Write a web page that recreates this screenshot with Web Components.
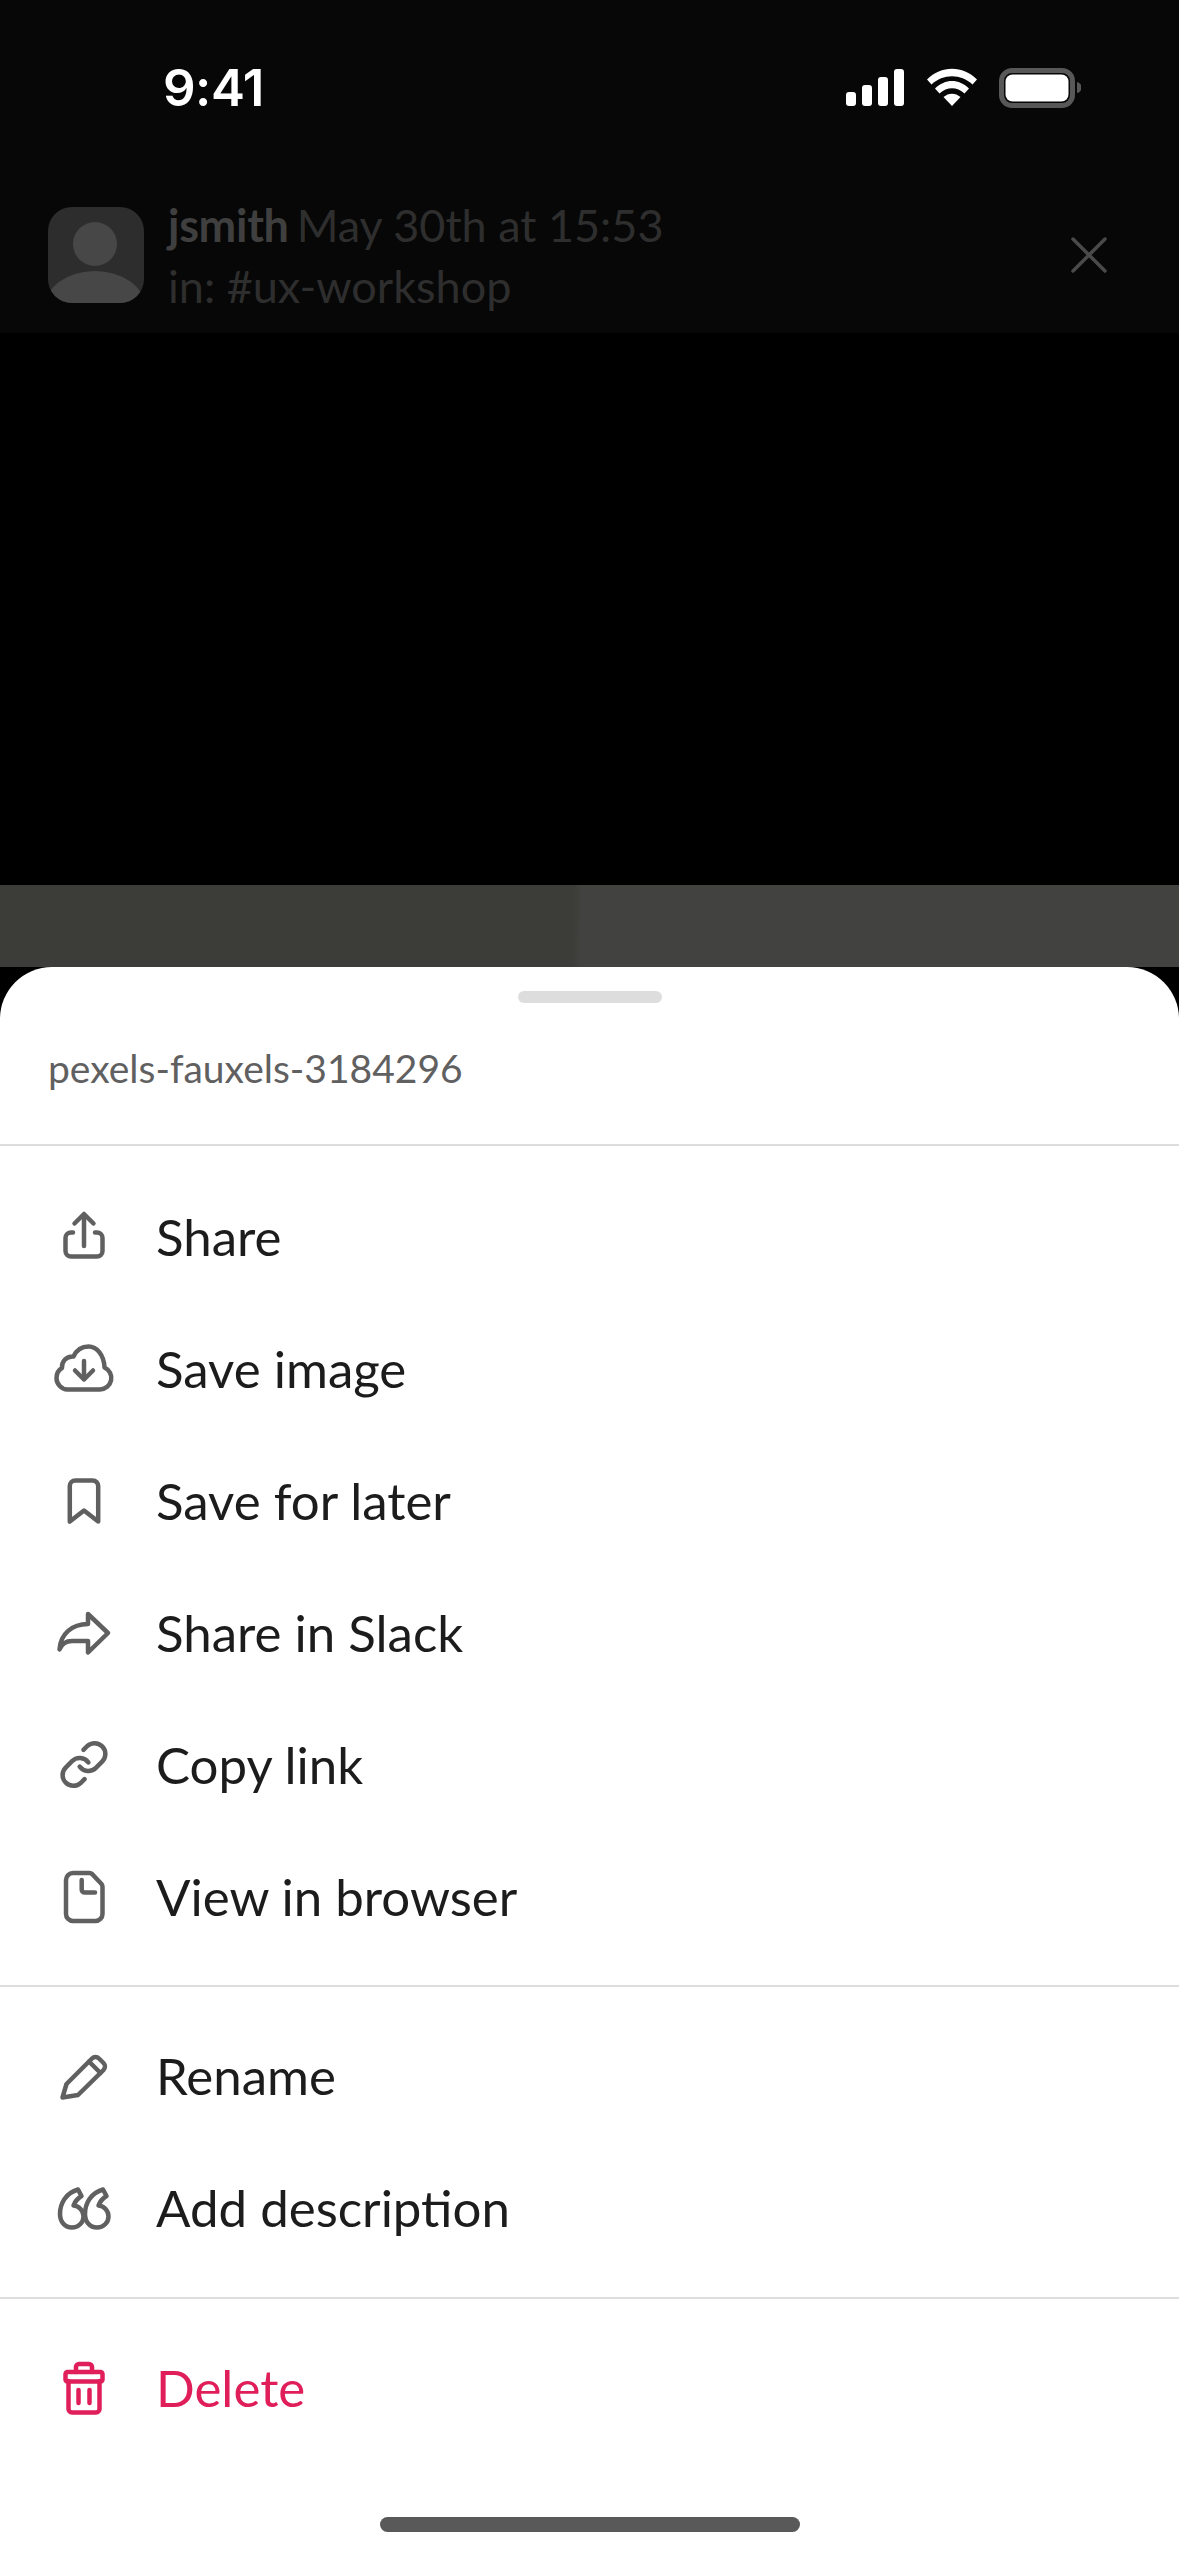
<!DOCTYPE html>
<html lang="en">
<head>
<meta charset="utf-8">
<title>File actions</title>
<style>
  html, body { margin: 0; padding: 0; background: #000; }
  body { width: 1179px; height: 2556px; overflow: hidden; font-family: "Lato", "Noto Sans", sans-serif; }
  file-screen { height: 2556px; }
</style>
</head>
<body>
<file-screen>
  <viewer-header slot="header" sender="jsmith" stamp="May 30th at 15:53" channel="in: #ux-workshop"></viewer-header>
  <photo-stage slot="stage"></photo-stage>
  <action-sheet slot="sheet" title="pexels-fauxels-3184296">
    <sheet-group>
      <sheet-item icon="share">Share</sheet-item>
      <sheet-item icon="cloud">Save image</sheet-item>
      <sheet-item icon="bookmark">Save for later</sheet-item>
      <sheet-item icon="forward">Share in Slack</sheet-item>
      <sheet-item icon="link">Copy link</sheet-item>
      <sheet-item icon="doc">View in browser</sheet-item>
    </sheet-group>
    <sheet-group>
      <sheet-item icon="pencil">Rename</sheet-item>
      <sheet-item icon="quote">Add description</sheet-item>
    </sheet-group>
    <sheet-group>
      <sheet-item icon="trash" danger>Delete</sheet-item>
    </sheet-group>
  </action-sheet>
</file-screen>

<script>
// All icons are drawn in a 72x72 box, stroked with currentColor
const ICONS = {
  share: '<path d="M25 30.5h-2a5.5 5.5 0 0 0-5.5 5.5v13a5.5 5.5 0 0 0 5.5 5.5h26a5.5 5.5 0 0 0 5.5-5.5V36a5.5 5.5 0 0 0-5.5-5.5h-2"/><path d="M36 44V13"/><path d="M26.5 21.5 36 12l9.5 9.5"/>',
  cloud: '<path d="M19.5 55.5H52a11.5 11.5 0 0 0 4.5-22C56 21 49 12.5 40.5 12.5 33 12.5 28 17 25.5 22.5 18 22 13.5 28 14 34 10.5 36 8.5 40 8.5 44a11.5 11.5 0 0 0 11 11.5Z"/><path d="M36 27v18"/><path d="m27 36.5 9 9 9-9"/>',
  bookmark: '<path d="M21.8 55.5V20a5.5 5.5 0 0 1 5.5-5.5h17.4a5.5 5.5 0 0 1 5.5 5.5v35.5L36 44.5Z"/>',
  forward: '<path d="M40 16 60 35 40 54.5V43H24c-6 0-10.5 3.5-12.5 8.5C12.5 36 24 26 40 26Z"/>',
  link: '<g transform="translate(10.2 8.7) scale(2.15)" stroke-width="2.1"><path d="M10 13a5 5 0 0 0 7.54.54l3-3a5 5 0 0 0-7.07-7.07l-1.72 1.71"/><path d="M14 11a5 5 0 0 0-7.54-.54l-3 3a5 5 0 0 0 7.07 7.07l1.71-1.71"/></g>',
  doc: '<path d="M25 11h16.5c1 0 2 .4 2.8 1.2l9 9.6c.7.8 1.2 1.8 1.2 2.8V52a7 7 0 0 1-7 7H25a7 7 0 0 1-7-7V18a7 7 0 0 1 7-7Z"/><path d="M33.7 18v9.5c0 1.7 1.3 3 3 3H47"/>',
  pencil: '<path d="M14.5 56.5 18.5 43 44 17.5a5 5 0 0 1 7 0l4.5 4.5a5 5 0 0 1 0 7L30 54Z"/><path d="M41 20.5 52.5 32"/>',
  quote: '<path d="M30 16.5C18 20 12 30 12 41c0 8 5 13.5 12 13.5 6.5 0 11.5-5 11.5-11 0-6-4.5-10.5-10-11 1.5-4 4-7 8-9.5Z"/><path transform="translate(25 0)" d="M30 16.5C18 20 12 30 12 41c0 8 5 13.5 12 13.5 6.5 0 11.5-5 11.5-11 0-6-4.5-10.5-10-11 1.5-4 4-7 8-9.5Z"/>',
  trash: '<rect x="17.5" y="19" width="37" height="9.5" rx="2"/><path d="M20.5 28v28a3.5 3.5 0 0 0 3.5 3.5h24a3.5 3.5 0 0 0 3.5-3.5V28"/><path d="M28 19v-5a3 3 0 0 1 3-3h10a3 3 0 0 1 3 3v5"/><path d="M30.5 37v13"/><path d="M41.5 37v13"/>'
};

class FileScreen extends HTMLElement {
  constructor() {
    super();
    this.attachShadow({ mode: 'open' });
  }

  connectedCallback() {
    this.shadowRoot.innerHTML = `
      <style>
        :host { display: flex; flex-direction: column; width: 1179px; background: #000; }
        .stage { display: flex; flex: 1; min-height: 0; }
      </style>
      <slot name="header"></slot>
      <div class="stage"><slot name="stage"></slot></div>
      <slot name="sheet"></slot>
    `;
  }
}

class StatusBar extends HTMLElement {
  constructor() {
    super();
    this.attachShadow({ mode: 'open' });
  }

  connectedCallback() {
    this.shadowRoot.innerHTML = `
      <style>
        :host { display: flex; align-items: flex-start; justify-content: space-between; height: 207px; box-sizing: border-box; padding: 60px 98px 0 163px; }
        .time { font: 600 51px/56px "Inter", "Liberation Sans", sans-serif; color: #fff; letter-spacing: -0.5px; }
        svg { display: block; margin-top: 8px; }
      </style>
      <span class="time">9:41</span>
      <svg width="235" height="40" viewBox="846 68 235 40">
        <g fill="#fff">
          <rect x="846" y="92" width="10" height="14" rx="3"/>
          <rect x="862" y="85" width="10" height="21" rx="3"/>
          <rect x="878" y="77" width="10" height="29" rx="3"/>
          <rect x="894" y="69" width="10" height="37" rx="3"/>
          <path d="M927 79.5C941 65 963 65 977 79.5l-4.5 5C961 73.5 943 73.5 931.5 84.5Z"/>
          <path d="M935 88.5c10-10 24-10 34 0l-4.5 5c-7.5-7-17.5-7-25 0Z"/>
          <path d="M943.5 97c5-4.5 12-4.5 17 0l-8.5 9Z"/>
        </g>
        <rect x="1001.5" y="70.5" width="71" height="35" rx="10.5" fill="none" stroke="#585858" stroke-width="5"/>
        <rect x="1005.5" y="74.5" width="63" height="27" rx="7" fill="#fff"/>
        <path d="M1077 82c3 .6 4.5 3 4.5 5.5s-1.5 5-4.5 5.5Z" fill="#585858"/>
      </svg>
    `;
  }
}

class ViewerHeader extends HTMLElement {
  constructor() {
    super();
    this.attachShadow({ mode: 'open' });
  }

  connectedCallback() {
    this.shadowRoot.innerHTML = `
      <style>
        :host { display: block; height: 333px; background: #070707; font-family: "Lato", "Noto Sans", sans-serif; }
        .message { display: flex; align-items: flex-start; padding: 0 72px 0 48px; }
        .avatar { display: block; flex: none; width: 96px; height: 96px; border-radius: 24px; background: #2d2d2d; }
        .meta { flex: 1; margin-left: 24px; font-size: 45px; line-height: 61px; margin-top: -12px; color: #2e2e2e; }
        .meta div { white-space: nowrap; }
        .sender { font-weight: 700; color: #3f3f3f; margin-right: 8px; letter-spacing: -0.3px; }
        .close { flex: none; margin-top: 30px; display: block; }
      </style>
      <status-bar></status-bar>
      <div class="message">
        <svg class="avatar" viewBox="0 0 96 96">
          <circle cx="47" cy="37" r="22" fill="#474747"/>
          <ellipse cx="47" cy="100" rx="50" ry="36" fill="#474747"/>
        </svg>
        <div class="meta">
          <div><span class="sender">${this.getAttribute('sender')}</span><span>${this.getAttribute('stamp')}</span></div>
          <div>${this.getAttribute('channel')}</div>
        </div>
        <svg class="close" width="36" height="36" viewBox="0 0 36 36" fill="none" stroke="#4a4a4a" stroke-width="3.5" stroke-linecap="round">
          <path d="M2 2l32 32"/><path d="M34 2 2 34"/>
        </svg>
      </div>
    `;
  }
}

// The dark viewer area, with the top of the dimmed photo above the sheet
class PhotoStage extends HTMLElement {
  constructor() {
    super();
    this.attachShadow({ mode: 'open' });
  }

  connectedCallback() {
    this.shadowRoot.innerHTML = `
      <style>
        :host { display: flex; flex-direction: column; flex: 1; justify-content: flex-end; background: #000; }
        .photo { height: 82px; background: linear-gradient(91deg, #3c3c38 0, #3c3c38 574px, #424240 582px, #424240 100%); }
      </style>
      <div class="photo"></div>
    `;
  }
}

class ActionSheet extends HTMLElement {
  constructor() {
    super();
    this.attachShadow({ mode: 'open' });
  }

  connectedCallback() {
    this.shadowRoot.innerHTML = `
      <style>
        :host { display: block; height: 1589px; box-sizing: border-box; position: relative; background: #fff; border-radius: 52px 52px 0 0; }
        .handle { width: 144px; height: 12px; margin: 0 auto; position: relative; top: 24px; border-radius: 6px; background: #dddddd; }
        .head { height: 165px; box-sizing: border-box; padding: 66px 0 0 48px; font: 400 39px/47px "Lato", "Noto Sans", sans-serif; color: #616061; }
        .home { position: absolute; left: 380px; top: 1550px; width: 420px; height: 15px; border-radius: 8px; background: #595959; }
      </style>
      <div class="handle"></div>
      <div class="head">${this.getAttribute('title')}</div>
      <slot></slot>
      <div class="home"></div>
    `;
  }
}

class SheetGroup extends HTMLElement {
  constructor() {
    super();
    this.attachShadow({ mode: 'open' });
  }

  connectedCallback() {
    this.shadowRoot.innerHTML = `
      <style>
        :host { display: block; border-top: 2px solid #dddddd; padding: 24px 0 22px; }
        :host(:first-of-type) { padding: 26px 0 21px; }
      </style>
      <slot></slot>
    `;
  }
}

class SheetItem extends HTMLElement {
  constructor() {
    super();
    this.attachShadow({ mode: 'open' });
  }

  connectedCallback() {
    const icon = ICONS[this.getAttribute('icon')] || '';
    this.shadowRoot.innerHTML = `
      <style>
        :host { display: flex; align-items: center; height: 132px; padding-left: 48px; font: 400 51px/60px "Lato", "Noto Sans", sans-serif; color: #1d1c1d; }
        :host([danger]) { color: #e01e5a; }
        svg { flex: none; color: #616061; margin-right: 36px; }
        :host([danger]) svg { color: #e01e5a; }
        span { margin-bottom: 2px; }
      </style>
      <svg width="72" height="72" viewBox="0 0 72 72" fill="none" stroke="currentColor" stroke-width="4.5" stroke-linecap="round" stroke-linejoin="round">${icon}</svg>
      <span><slot></slot></span>
    `;
  }
}

customElements.define('file-screen', FileScreen);
customElements.define('status-bar', StatusBar);
customElements.define('viewer-header', ViewerHeader);
customElements.define('photo-stage', PhotoStage);
customElements.define('action-sheet', ActionSheet);
customElements.define('sheet-group', SheetGroup);
customElements.define('sheet-item', SheetItem);
</script>
</body>
</html>
